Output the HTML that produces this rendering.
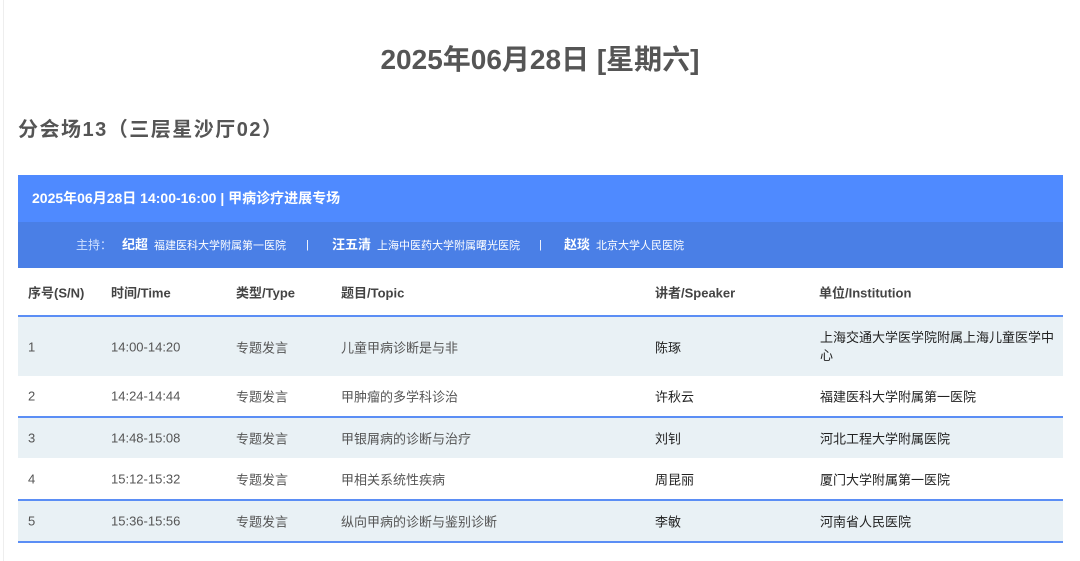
<!DOCTYPE html>
<html><head><meta charset="utf-8"><style>
*{margin:0;padding:0;box-sizing:border-box}
body{width:1080px;height:561px;background:#fff;font-family:"Liberation Sans","Noto Sans CJK SC",sans-serif;position:relative;overflow:hidden;color:#555}
.abs{position:absolute;white-space:nowrap}
h1{position:absolute;top:42px;left:0;width:1080px;text-align:center;font-size:28px;font-weight:bold;color:#555;line-height:36px}
h2{position:absolute;top:116px;left:18px;font-size:20px;font-weight:bold;color:#555;line-height:28px;letter-spacing:1.5px}
.band1{position:absolute;left:18px;top:175px;width:1045px;height:47px;background:#4f8aff;color:#fff;font-weight:bold;font-size:14px;line-height:47px;padding-left:14px}
.band2{position:absolute;left:18px;top:222px;width:1045px;height:46px;background:#4a7fe6;color:#fff;font-size:11px;line-height:46px}
.band2 b{font-size:13px;margin-right:6px}
.tbl{position:absolute;left:18px;top:268px;width:1045px}
.row{position:relative;width:1045px;font-size:13px}
.row span{position:absolute;top:50%;transform:translateY(-50%);white-space:nowrap}
.hdr{height:47px;font-weight:bold;color:#444}
.alt{background:#e9f1f5}
.bt{border-top:2px solid #5b8ef5}
.dk{color:#222}
</style></head><body>
<div style="position:absolute;left:3px;top:0;width:1px;height:561px;background:#eee"></div>
<h1>2025年06月28日 [星期六]</h1>
<h2>分会场13（三层星沙厅02）</h2>
<div class="band1">2025年06月28日 14:00-16:00 | 甲病诊疗进展专场</div>
<div class="band2"><span class="abs" style="left:58px;color:#cfe0ff;font-size:12px">主持：</span>
<span class="abs" style="left:104px"><b>纪超</b>福建医科大学附属第一医院</span>
<span class="abs" style="left:288px">|</span>
<span class="abs" style="left:314px"><b>汪五清</b>上海中医药大学附属曙光医院</span>
<span class="abs" style="left:521px">|</span>
<span class="abs" style="left:546px"><b>赵琰</b>北京大学人民医院</span></div>
<div class="tbl">
<div class="row hdr"><span style="left:10px">序号(S/N)</span><span style="left:93px">时间/Time</span><span style="left:218px">类型/Type</span><span style="left:323px">题目/Topic</span><span style="left:637px">讲者/Speaker</span><span style="left:801px">单位/Institution</span></div>
<div class="row alt bt" style="height:61px"><span style="left:10px">1</span><span style="left:93px">14:00-14:20</span><span style="left:218px">专题发言</span><span style="left:323px">儿童甲病诊断是与非</span><span class="dk" style="left:637px">陈琢</span><span class="dk" style="left:802px;white-space:normal;width:236px;line-height:18px">上海交通大学医学院附属上海儿童医学中心</span></div>
<div class="row" style="height:40px"><span style="left:10px">2</span><span style="left:93px">14:24-14:44</span><span style="left:218px">专题发言</span><span style="left:323px">甲肿瘤的多学科诊治</span><span class="dk" style="left:637px">许秋云</span><span class="dk" style="left:802px">福建医科大学附属第一医院</span></div>
<div class="row alt bt" style="height:42px"><span style="left:10px">3</span><span style="left:93px">14:48-15:08</span><span style="left:218px">专题发言</span><span style="left:323px">甲银屑病的诊断与治疗</span><span class="dk" style="left:637px">刘钊</span><span class="dk" style="left:802px">河北工程大学附属医院</span></div>
<div class="row" style="height:41px"><span style="left:10px">4</span><span style="left:93px">15:12-15:32</span><span style="left:218px">专题发言</span><span style="left:323px">甲相关系统性疾病</span><span class="dk" style="left:637px">周昆丽</span><span class="dk" style="left:802px">厦门大学附属第一医院</span></div>
<div class="row alt bt" style="height:44px;border-bottom:2px solid #5b8ef5"><span style="left:10px">5</span><span style="left:93px">15:36-15:56</span><span style="left:218px">专题发言</span><span style="left:323px">纵向甲病的诊断与鉴别诊断</span><span class="dk" style="left:637px">李敏</span><span class="dk" style="left:802px">河南省人民医院</span></div>
</div>
</body></html>
